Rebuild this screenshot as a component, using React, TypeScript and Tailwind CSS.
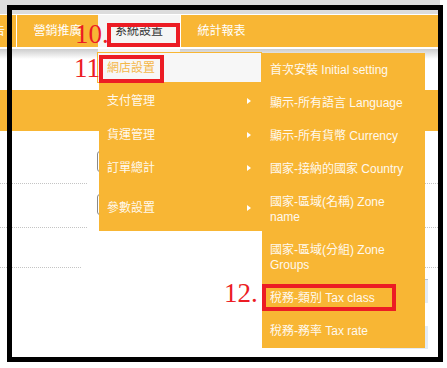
import React from "react";

const ORANGE = "bg-[#f8b634]";

function Arrow() {
  return (
    <span className="block w-0 h-0 border-y-[3.5px] border-y-transparent border-l-[4px] border-l-white" />
  );
}

export default function App() {
  const firstMenu = [
    { label: "支付管理", h: "h-[35px]" },
    { label: "貨運管理", h: "h-[33px]" },
    { label: "訂單總計", h: "h-[34px]" },
    { label: "參數設置", h: "h-[46px]" },
  ];
  const subMenu: { lines: string[] }[] = [
    { lines: ["首次安裝 Initial setting"] },
    { lines: ["顯示-所有語言 Language"] },
    { lines: ["顯示-所有貨幣 Currency"] },
    { lines: ["國家-接納的國家 Country"] },
    { lines: ["國家-區域(名稱) Zone", "name"] },
    { lines: ["國家-區域(分組) Zone", "Groups"] },
    { lines: ["稅務-類別 Tax class"] },
    { lines: ["稅務-務率 Tax rate"] },
  ];

  return (
    <div className="relative w-[447px] h-[368px] overflow-hidden bg-white font-['Liberation_Sans','Noto_Sans_CJK_TC',sans-serif] text-[12px]">
      {/* underlying page */}
      <div className="w-[440px]">
        <div className="h-[14px] bg-[#dcdcdc]" />
        <div className="h-px bg-white" />
        <nav className={`flex h-[32px] ${ORANGE} text-white`}>
          <div className="w-[16px] overflow-hidden flex justify-end items-center">
            <span className="pr-[11px] whitespace-nowrap">廣告</span>
          </div>
          <div className="w-[82px] border-l border-white flex items-center justify-center">
            營銷推廣
          </div>
          <div className="w-[82px] bg-[#f5f5f5] flex items-center justify-center text-[#333]">
            系統設置
          </div>
          <div className="w-[82px] border-l border-white flex items-center justify-center">
            統計報表
          </div>
        </nav>
        <div className="h-[2px] bg-white" />
        <div className="h-[41px]">
          <div className="h-[10px] bg-linear-to-b from-[#cdcdcd] to-white" />
        </div>
        <div className={`h-[41px] ${ORANGE}`} />
        {/* row 1 */}
        <div className="flex h-[53px]">
          <div className="w-[87px] border-b border-dotted border-[#c4c4c4]" />
          <div className="w-[175px] pl-[10px] pt-[20px]">
            <div className="h-[21px] w-[150px] border border-[#8a8a8a] rounded-[3px]" />
          </div>
          <div className="flex-1 border-b border-dotted border-[#c4c4c4]" />
        </div>
        {/* row 2 */}
        <div className="flex h-[44px]">
          <div className="w-[87px] border-b border-dotted border-[#c4c4c4]" />
          <div className="w-[175px] pl-[10px] pt-[10px]">
            <div className="h-[21px] w-[150px] border border-[#8a8a8a] rounded-[3px]" />
          </div>
          <div className="flex-1 border-b border-dotted border-[#c4c4c4]" />
        </div>
        {/* row 3 */}
        <div className="flex h-[40px]">
          <div className="w-[81px] border-b border-dotted border-[#c4c4c4]" />
          <div className="w-[181px]" />
          <div className="flex-1 border-b border-dotted border-[#c4c4c4]" />
        </div>
        <div className="pl-[380px] pt-[11px] flex flex-col gap-[23px]">
          <div className="w-[48px] h-[24px] bg-[#e3ebf4] border-t border-[#b9c3cf]" />
          <div className="w-[48px] h-[23px] bg-[#e3ebf4]" />
        </div>
      </div>

      {/* first-level dropdown */}
      <div className="absolute left-[97px] top-[49px] w-[165px]">
        <div className="h-[3px] ml-px w-[82px] bg-[#f5f5f5]" />
        <div className="h-[31px] bg-[#f7f7f7] border border-[#f8b634] flex items-center pl-[9px] text-[#f5b84a]">
          網店設置
        </div>
        <div className={`ml-[2px] ${ORANGE} text-[#fff9ee]`}>
          {firstMenu.map((m) => (
            <div key={m.label} className={`${m.h} flex items-center justify-between pl-[8px] pr-[11px]`}>
              <span>{m.label}</span>
              <Arrow />
            </div>
          ))}
        </div>
      </div>

      {/* second-level dropdown */}
      <div className={`absolute left-[262px] top-[53px] w-[163px] ${ORANGE} pt-px text-[#fff9ee]`}>
        {subMenu.map((s) => (
          <div key={s.lines[0]} className="py-[9px] pl-[8px] leading-[15px]">
            {s.lines.map((l) => (
              <div key={l} className="whitespace-nowrap">{l}</div>
            ))}
          </div>
        ))}
      </div>

      {/* annotations */}
      <div className="absolute left-[107px] top-[23px] w-[73px] h-[24px] border-[4px] border-[#ec1c24]" />
      <div className="absolute left-[99px] top-[55px] w-[65px] h-[28px] border-[4px] border-[#ec1c24]" />
      <div className="absolute left-[262px] top-[284px] w-[134px] h-[27px] border-[4px] border-[#ec1c24]" />
      <div className="absolute left-[75px] top-[21px] text-[27px] leading-[27px] text-[#ec1c24] font-['Liberation_Serif',serif]">
        10.
      </div>
      <div className="absolute left-[74px] top-[55px] text-[27px] leading-[27px] text-[#ec1c24] font-['Liberation_Serif',serif]">
        11
      </div>
      <div className="absolute left-[224px] top-[280px] text-[27px] leading-[27px] text-[#ec1c24] font-['Liberation_Serif',serif]">
        12.
      </div>
      <div className="absolute left-[7px] top-[5px] w-[436px] h-[357px] border-[5px] border-black" />
    </div>
  );
}
